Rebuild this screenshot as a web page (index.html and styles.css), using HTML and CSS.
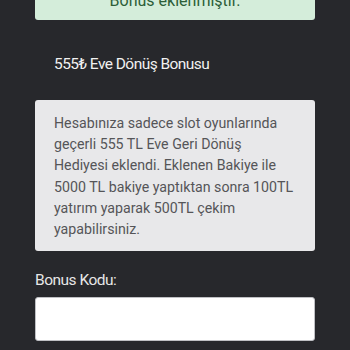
FILE: index.html
```html
<!DOCTYPE html>
<html lang="tr">
<head>
<meta charset="utf-8">
<link rel="stylesheet" href="styles.css">
</head>
<body>
<div class="page">
  <div class="alert">Bonus eklenmiştir.</div>
  <div class="title">555₺ Eve Dönüş Bonusu</div>
  <div class="info">Hesabınıza sadece slot oyunlarında geçerli 555 TL Eve Geri Dönüş Hediyesi eklendi. Eklenen Bakiye ile 5000 TL bakiye yaptıktan sonra 100TL yatırım yaparak 500TL çekim yapabilirsiniz.</div>
  <label class="label" for="code">Bonus Kodu:</label>
  <input class="input" id="code" type="text">
</div>
</body>
</html>
```

FILE: styles.css
```css
html, body {
  margin: 0;
  padding: 0;
  background: #27282c;
  height: 100%;
  overflow: hidden;
}
body {
  font-family: Roboto, "Noto Sans", sans-serif;
}
.page {
  width: 280px;
  margin-left: 35px;
  display: flex;
  flex-direction: column;
}
.alert {
  margin-top: -11px;
  padding: 0 0 7px;
  background: #d4edda;
  color: #2c5e38;
  font-size: 16px;
  line-height: 24px;
  text-align: center;
  border-radius: 0 0 3px 3px;
}
.title {
  margin-top: 32px;
  padding-left: 19px;
  color: #f1f1f1;
  font-size: 15.5px;
  letter-spacing: -0.55px;
  line-height: 24px;
}
.info {
  margin-top: 24px;
  padding: 13px 19px 11px;
  background: #e8e8ea;
  color: #555558;
  font-size: 14.2px;
  line-height: 21.2px;
  border-radius: 3px;
}
.label {
  margin-top: 17px;
  color: #e6e6e6;
  font-size: 15.5px;
  letter-spacing: -0.5px;
  line-height: 24px;
}
.input {
  margin-top: 5px;
  height: 44px;
  box-sizing: border-box;
  border: 1px solid #bfc0c4;
  border-radius: 3px;
  background: #fff;
  padding: 0 10px;
  outline: none;
}
```
